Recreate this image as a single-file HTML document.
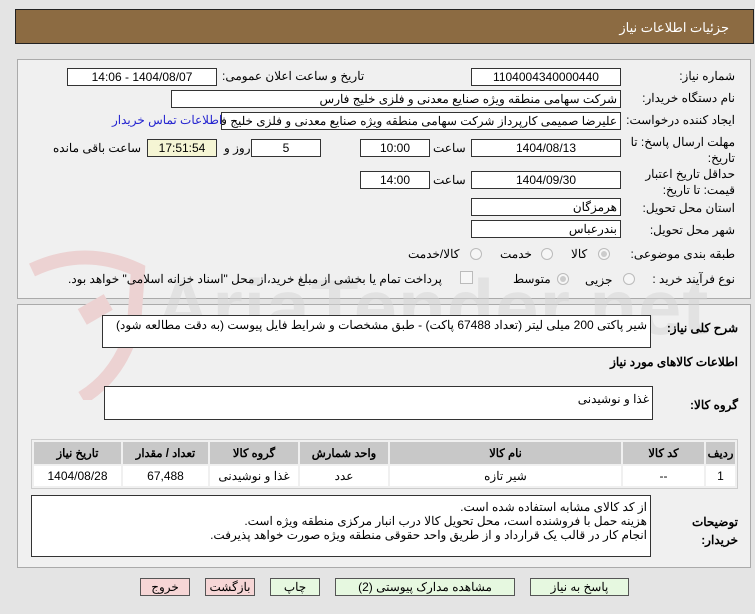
<!DOCTYPE html>
<html><head><meta charset="utf-8"><style>
*{margin:0;padding:0;box-sizing:border-box}
body{width:755px;height:614px;background:#e4e4e4;font-family:"Liberation Sans","Noto Sans CJK SC",sans-serif;font-size:12px;color:#000;position:relative;overflow:hidden;direction:rtl}
.a{position:absolute;white-space:nowrap}
.hdr{left:15px;top:9px;width:739px;height:35px;background:#8c6b42;border:1px solid #222}
.hdr span{position:absolute;right:24px;top:10px;color:#fff;font-size:13px}
.pnl{border:1px solid #aaa;background:#f0f0f0}
.f{position:absolute;background:#fff;border:1px solid #333;height:18px;line-height:16px;font-size:12px;padding:0 3px;white-space:nowrap;overflow:hidden}
.c{text-align:center}
.l{position:absolute;white-space:nowrap;font-size:12px}
.rad{position:absolute;width:12px;height:12px;border:1px solid #bbb;border-radius:50%;background:#f6f6f6}
.rad.on::after{content:"";position:absolute;left:2px;top:2px;width:6px;height:6px;border-radius:50%;background:#ccc}
table{border-collapse:separate;border-spacing:2px;position:absolute;left:31px;top:439px;width:707px;background:#f0f0f0;border:1px solid #ccc}
th{background:#c8c8c8;height:22px;font-size:11.5px;font-weight:bold}
td{background:#fff;height:20px;text-align:center;font-size:12px}
.btn{position:absolute;top:578px;height:18px;border:1px solid #555;background:#e6f8e0;font-size:12px;text-align:center;line-height:16px}
.red{background:#f6d6d6}
.ta{position:absolute;background:#fff;border:1px solid #333;font-size:12px;padding:2px 3px;line-height:15px;white-space:nowrap;overflow:hidden}
b{font-weight:bold}
</style></head><body>
<div class="a hdr"><span>جزئیات اطلاعات نیاز</span></div>

<div class="a pnl" style="left:17px;top:59px;width:734px;height:240px"></div>
<div class="a pnl" style="left:17px;top:304px;width:734px;height:264px"></div>

<svg class="a" style="left:20px;top:250px" width="130" height="150" viewBox="0 0 130 150"><path d="M12 20 Q65 -5 118 20 L114 75 Q100 125 62 148" fill="none" stroke="#ecd2d2" stroke-width="14"/><rect x="58" y="50" width="30" height="18" fill="#ecd2d2" transform="rotate(-30 75 55)"/></svg>
<div class="a" style="left:155px;top:262px;font-size:78px;font-weight:bold;color:#d6d6d6;opacity:.5;direction:ltr;letter-spacing:1px">AriaTender.net</div>

<div class="l" style="right:20px;top:69px">شماره نیاز:</div>
<div class="f c" style="left:471px;top:68px;width:150px">1104004340000440</div>
<div class="l" style="left:222px;top:69px">تاریخ و ساعت اعلان عمومی:</div>
<div class="f c" style="left:67px;top:68px;width:150px">1404/08/07 - 14:06</div>

<div class="l" style="right:20px;top:91px">نام دستگاه خریدار:</div>
<div class="f" style="left:171px;top:90px;width:450px">شرکت سهامی منطقه ویژه صنایع معدنی و فلزی خلیج فارس</div>

<div class="l" style="right:20px;top:113px">ایجاد کننده درخواست:</div>
<div class="f" style="left:221px;top:112px;width:400px">علیرضا صمیمی کارپرداز شرکت سهامی منطقه ویژه صنایع معدنی و فلزی خلیج فارس</div>
<div class="l" style="left:112px;top:113px;color:#2424d0">اطلاعات تماس خریدار</div>

<div class="l" style="right:20px;top:134px;line-height:16px">مهلت ارسال پاسخ: تا<br>تاریخ:</div>
<div class="f c" style="left:471px;top:139px;width:150px">1404/08/13</div>
<div class="l" style="left:433px;top:141px">ساعت</div>
<div class="f c" style="left:360px;top:139px;width:70px">10:00</div>
<div class="f c" style="left:251px;top:139px;width:70px">5</div>
<div class="l" style="left:224px;top:141px">روز و</div>
<div class="f c" style="left:147px;top:139px;width:70px;background:#f5f5d4">17:51:54</div>
<div class="l" style="left:53px;top:141px">ساعت باقی مانده</div>

<div class="l" style="right:20px;top:166px;line-height:16px">حداقل تاریخ اعتبار<br>قیمت: تا تاریخ:</div>
<div class="f c" style="left:471px;top:171px;width:150px">1404/09/30</div>
<div class="l" style="left:433px;top:173px">ساعت</div>
<div class="f c" style="left:360px;top:171px;width:70px">14:00</div>

<div class="l" style="right:20px;top:201px">استان محل تحویل:</div>
<div class="f" style="left:471px;top:198px;width:150px">هرمزگان</div>
<div class="l" style="right:20px;top:223px">شهر محل تحویل:</div>
<div class="f" style="left:471px;top:220px;width:150px">بندرعباس</div>

<div class="l" style="right:20px;top:247px">طبقه بندی موضوعی:</div>
<div class="rad on" style="left:598px;top:248px"></div><div class="l" style="left:571px;top:247px">کالا</div>
<div class="rad" style="left:541px;top:248px"></div><div class="l" style="left:500px;top:247px">خدمت</div>
<div class="rad" style="left:470px;top:248px"></div><div class="l" style="left:408px;top:247px">کالا/خدمت</div>

<div class="l" style="right:20px;top:272px">نوع فرآیند خرید :</div>
<div class="rad" style="left:623px;top:273px"></div><div class="l" style="left:585px;top:273px">جزیی</div>
<div class="rad on" style="left:557px;top:273px"></div><div class="l" style="left:513px;top:272px">متوسط</div>
<div class="a" style="left:460px;top:271px;width:13px;height:13px;border:1px solid #bbb;background:#f6f6f6"></div>
<div class="l" style="left:68px;top:272px">پرداخت تمام یا بخشی از مبلغ خرید،از محل "اسناد خزانه اسلامی" خواهد بود.</div>

<div class="l" style="right:17px;top:321px"><b>شرح کلی نیاز:</b></div>
<div class="ta" style="left:102px;top:315px;width:549px;height:33px">شیر پاکتی 200 میلی لیتر (تعداد 67488 پاکت) - طبق مشخصات و شرایط فایل پیوست (به دقت مطالعه شود)</div>
<div class="l" style="right:17px;top:355px"><b>اطلاعات کالاهای مورد نیاز</b></div>
<div class="l" style="right:17px;top:398px"><b>گروه کالا:</b></div>
<div class="ta" style="left:104px;top:386px;width:549px;height:34px;padding-top:5px">غذا و نوشیدنی</div>

<table>
<tr><th style="width:29px">ردیف</th><th style="width:81px">کد کالا</th><th style="width:231px">نام کالا</th><th style="width:88px">واحد شمارش</th><th style="width:88px">گروه کالا</th><th style="width:85px">تعداد / مقدار</th><th>تاریخ نیاز</th></tr>
<tr><td>1</td><td>--</td><td>شیر تازه</td><td>عدد</td><td>غذا و نوشیدنی</td><td>67,488</td><td>1404/08/28</td></tr>
</table>

<div class="l" style="right:17px;top:513px;line-height:18px"><b>توضیحات<br>خریدار:</b></div>
<div class="ta" style="left:31px;top:495px;width:620px;height:62px;padding-top:4px;line-height:14px">از کد کالای مشابه استفاده شده است.<br>هزینه حمل با فروشنده است، محل تحویل کالا درب انبار مرکزی منطقه ویژه است.<br>انجام کار در قالب یک قرارداد و از طریق واحد حقوقی منطقه ویژه صورت خواهد پذیرفت.</div>

<div class="btn" style="left:530px;width:99px">پاسخ به نیاز</div>
<div class="btn" style="left:335px;width:180px">مشاهده مدارک پیوستی (2)</div>
<div class="btn" style="left:270px;width:50px">چاپ</div>
<div class="btn red" style="left:205px;width:50px">بازگشت</div>
<div class="btn red" style="left:140px;width:50px">خروج</div>
</body></html>
